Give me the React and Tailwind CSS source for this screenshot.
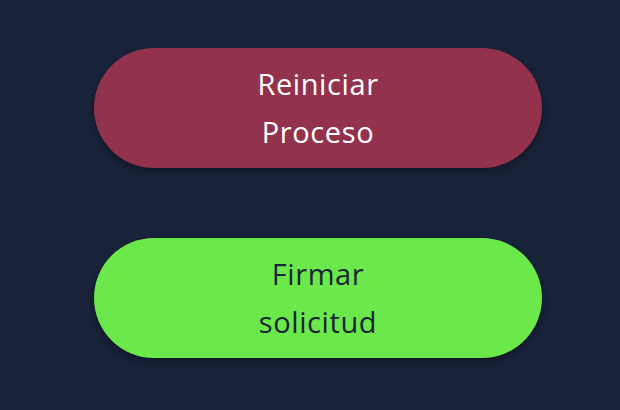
export default function App() {
  const buttons = [
    { lines: ['Reiniciar', 'Proceso'], cls: 'bg-[#93324c] text-white' },
    { lines: ['Firmar', 'solicitud'], cls: 'bg-[#6be84a] text-[#1b2438]' },
  ];

  return (
    <div
      className="w-[620px] h-[410px] bg-[#19233a] pt-[48px] pl-[94px] flex flex-col gap-[70px]"
      style={{ fontFamily: '"Open Sans", "Noto Sans", sans-serif' }}
    >
      {buttons.map((b) => (
        <button
          key={b.lines[0]}
          className={`w-[448px] h-[120px] rounded-full flex flex-col items-center justify-center text-[29px] tracking-[0.6px] leading-[48px] shadow-[0_4px_8px_rgba(0,0,0,0.35)] ${b.cls}`}
        >
          {b.lines.map((l) => (
            <span key={l}>{l}</span>
          ))}
        </button>
      ))}
    </div>
  );
}
